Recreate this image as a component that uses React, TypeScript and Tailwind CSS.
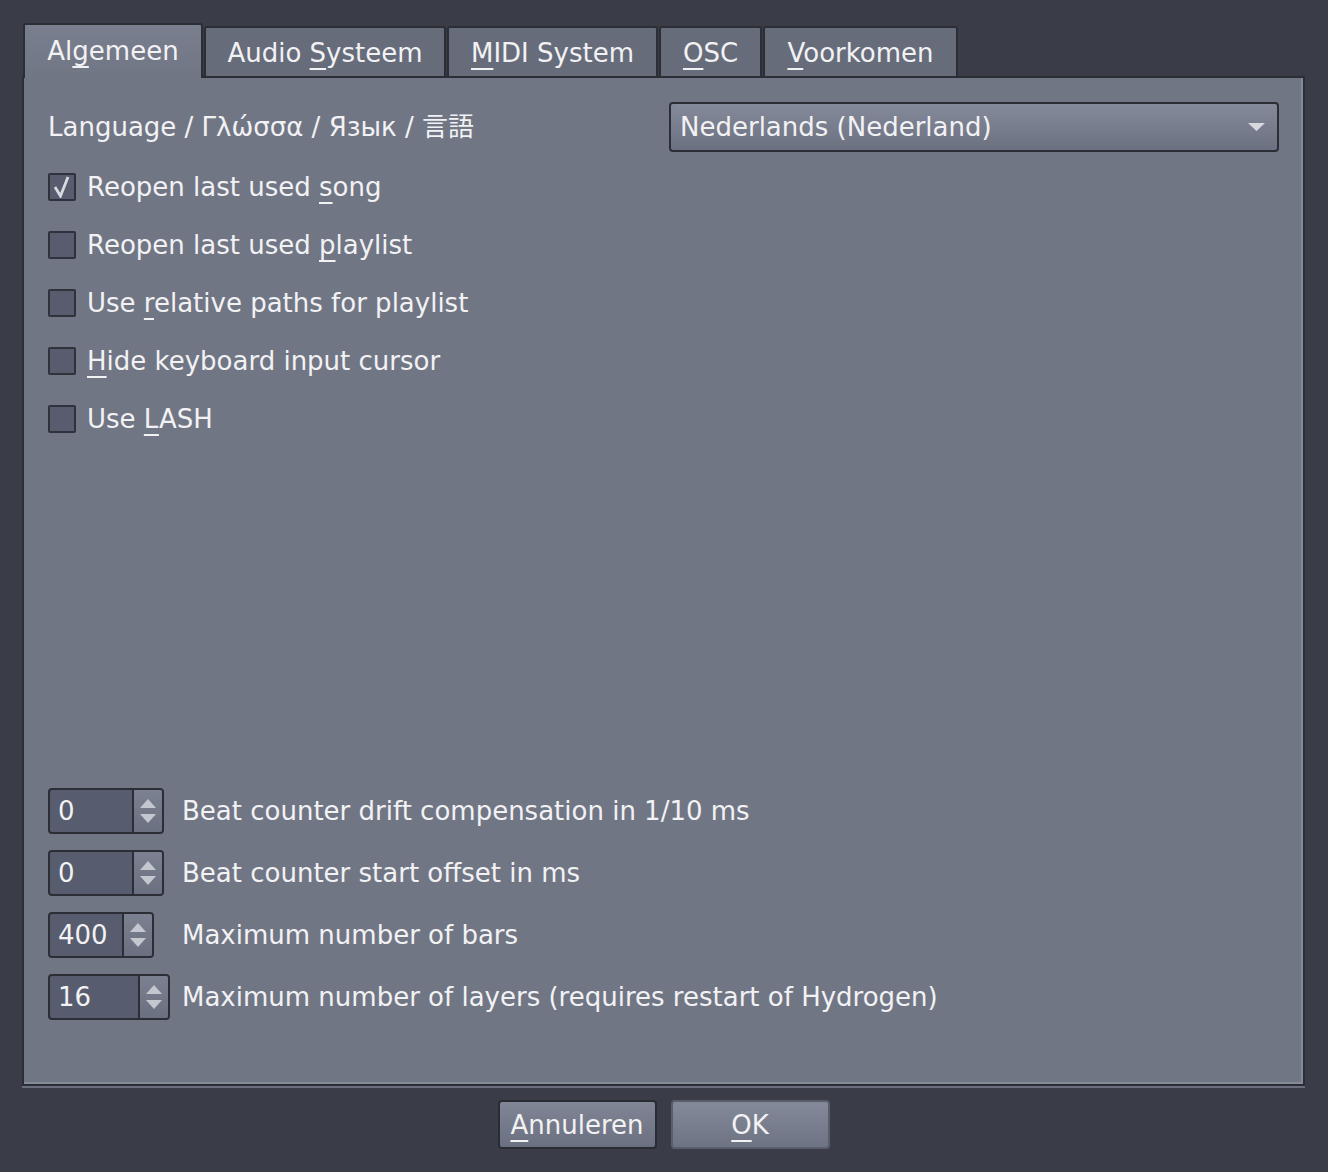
import React from 'react';

const font = { fontFamily: '"DejaVu Sans", "Noto Sans CJK JP", sans-serif' };

const U = ({ children }: { children: React.ReactNode }) => (
  <span className="underline decoration-2 underline-offset-[6px]">{children}</span>
);

const Tab = ({ active, w, children }: { active?: boolean; w: number; children: React.ReactNode }) =>
  active ? (
    <div
      className="relative z-10 -mb-[2px] flex h-[55px] items-start justify-center rounded-t-[3px] border-2 border-b-0 border-[#2c2e36] bg-gradient-to-b from-[#7a7f8f] to-[#717685] pt-[7px]"
      style={{ width: w }}
    >
      <span>{children}</span>
    </div>
  ) : (
    <div
      className="flex h-[50px] items-start justify-center rounded-t-[3px] border-2 border-b-0 border-[#2c2e36] bg-[#676c7b] pt-[6px]"
      style={{ width: w }}
    >
      <span>{children}</span>
    </div>
  );

const Check = ({ checked, children }: { checked?: boolean; children: React.ReactNode }) => (
  <div className="flex h-[58px] items-center gap-[11px]">
    <div className="flex h-[28px] w-[28px] items-center justify-center rounded-[2px] border-2 border-[#30323b] bg-[#575c6e]">
      {checked && (
        <svg width="20" height="22" viewBox="0 0 20 22">
          <path d="M3 11 L8.5 20 L16 1" fill="none" stroke="#d8dae0" strokeWidth="2.8" />
        </svg>
      )}
    </div>
    <span>{children}</span>
  </div>
);

const Spin = ({ value, w, children }: { value: string; w: number; children: React.ReactNode }) => (
  <div className="flex h-[62px] items-center">
    <div className="w-[134px]">
      <div
        className="flex h-[46px] overflow-hidden rounded-[4px] border-2 border-[#2c2e36] bg-[#575c6e]"
        style={{ width: w }}
      >
        <div className="flex flex-1 items-center border-r-2 border-[#2c2e36] pl-[8px]">{value}</div>
        <div className="flex w-[28px] flex-col items-center justify-center gap-[6px] bg-gradient-to-b from-[#7c8191] to-[#6b7080]">
          <svg width="16" height="9" viewBox="0 0 16 9">
            <path d="M0 9 L8 0 L16 9 Z" fill="#c4c7cf" />
          </svg>
          <svg width="16" height="9" viewBox="0 0 16 9">
            <path d="M0 0 L16 0 L8 9 Z" fill="#c4c7cf" />
          </svg>
        </div>
      </div>
    </div>
    <span>{children}</span>
  </div>
);

export default function App() {
  return (
    <div
      className="flex h-[1172px] w-[1328px] flex-col bg-[#3a3d48] pt-[23px] pl-[22px] text-[26px] text-[#f2f2f4]"
      style={font}
    >
      <div className="flex items-end gap-[1px] pl-[1px]">
        <Tab active w={180}>
          Al<U>g</U>emeen
        </Tab>
        <Tab w={242}>
          Audio <U>S</U>ysteem
        </Tab>
        <Tab w={211}>
          <U>M</U>IDI System
        </Tab>
        <Tab w={103}>
          <U>O</U>SC
        </Tab>
        <Tab w={195}>
          <U>V</U>oorkomen
        </Tab>
      </div>
      <div className="h-[1010px] w-[1283px] border-2 border-[#2c2e36] shadow-[0_2px_0_#6b6f7d]">
        <div className="flex h-full flex-col border-r-2 border-b-2 border-r-[#858a99] border-b-[#858a99] bg-[#717685] pt-[24px] pr-[22px] pl-[24px]">
          <div className="flex items-center justify-between">
            <span>Language / Γλώσσα / Язык / 言語</span>
            <div className="flex h-[50px] w-[610px] items-center justify-between rounded-[4px] border-2 border-[#2c2e36] bg-gradient-to-b from-[#858a9a] to-[#6c7181] pr-[12px] pl-[9px]">
              <span>Nederlands (Nederland)</span>
              <svg width="17" height="8" viewBox="0 0 17 8">
                <path d="M0 0 L17 0 L8.5 8 Z" fill="#d6d8de" />
              </svg>
            </div>
          </div>
          <div className="mt-[6px] flex flex-col">
            <Check checked>
              Reopen last used <U>s</U>ong
            </Check>
            <Check>
              Reopen last used <U>p</U>laylist
            </Check>
            <Check>
              Use <U>r</U>elative paths for playlist
            </Check>
            <Check>
              <U>H</U>ide keyboard input cursor
            </Check>
            <Check>
              Use <U>L</U>ASH
            </Check>
          </div>
          <div className="mt-[332px] flex flex-col">
            <Spin value="0" w={116}>
              Beat counter drift compensation in 1/10 ms
            </Spin>
            <Spin value="0" w={116}>
              Beat counter start offset in ms
            </Spin>
            <Spin value="400" w={106}>
              Maximum number of bars
            </Spin>
            <Spin value="16" w={122}>
              Maximum number of layers (requires restart of Hydrogen)
            </Spin>
          </div>
        </div>
      </div>
      <div className="mt-[14px] flex w-[1283px] justify-center gap-[14px]">
        <div className="flex h-[49px] w-[159px] items-center justify-center rounded-[4px] border-2 border-[#2a2c33] bg-gradient-to-b from-[#818696] to-[#6b7080] pt-[2px]">
          <span>
            <U>A</U>nnuleren
          </span>
        </div>
        <div className="flex h-[49px] w-[159px] items-center justify-center rounded-[4px] border-2 border-[#5a5e6c] bg-gradient-to-b from-[#858a9a] to-[#6e7383] pt-[2px]">
          <span>
            <U>O</U>K
          </span>
        </div>
      </div>
    </div>
  );
}
